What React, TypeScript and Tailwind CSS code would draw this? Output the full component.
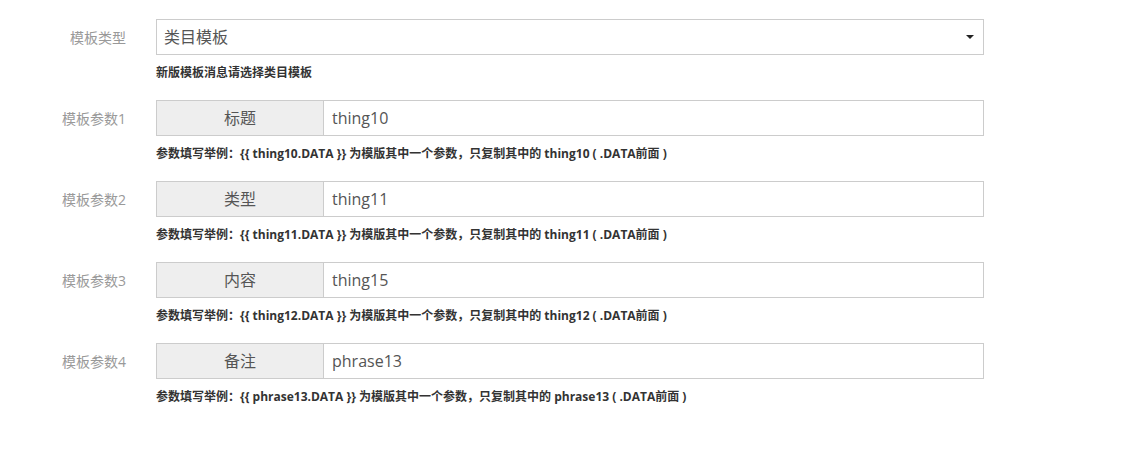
const font = { fontFamily: '"Open Sans", "Noto Sans CJK SC", sans-serif' }

const params = [
  { label: '模板参数1', title: '标题', value: 'thing10', hint: 'thing10' },
  { label: '模板参数2', title: '类型', value: 'thing11', hint: 'thing11' },
  { label: '模板参数3', title: '内容', value: 'thing15', hint: 'thing12' },
  { label: '模板参数4', title: '备注', value: 'phrase13', hint: 'phrase13' },
]

function Row({ label, children, help }: { label: string; children: React.ReactNode; help: string }) {
  return (
    <div className="flex">
      <div className="w-[126px] h-[36px] flex items-center justify-end text-[14px] text-[#999]">{label}</div>
      <div className="ml-[30px] w-[828px]">
        {children}
        <div className="mt-[9px] text-[12px] font-bold text-[#333] leading-[17px] whitespace-pre">{help}</div>
      </div>
    </div>
  )
}

export default function App() {
  return (
    <div className="w-[1122px] h-[455px] bg-white pt-[19px]" style={font}>
      <div className="flex flex-col gap-[19px]">
        <Row label="模板类型" help="新版模板消息请选择类目模板">
          <div className="h-[36px] border border-[#ccc] flex items-center justify-between pl-[7px] pr-[9px] text-[16px] text-[#555]">
            <span>类目模板</span>
            <svg width="8" height="4" viewBox="0 0 8 4">
              <path d="M0 0h8L4 4z" fill="#222" />
            </svg>
          </div>
        </Row>
        {params.map((p) => (
          <Row
            key={p.label}
            label={p.label}
            help={`参数填写举例：{{ ${p.hint}.DATA }} 为模版其中一个参数，只复制其中的 ${p.hint} ( .DATA前面 )`}
          >
            <div className="flex h-[36px] text-[16px] text-[#555]">
              <div className="w-[168px] bg-[#eee] border border-[#ccc] flex items-center justify-center">{p.title}</div>
              <div className="flex-1 border border-[#ccc] border-l-0 pl-[8px] flex items-center">{p.value}</div>
            </div>
          </Row>
        ))}
      </div>
    </div>
  )
}
